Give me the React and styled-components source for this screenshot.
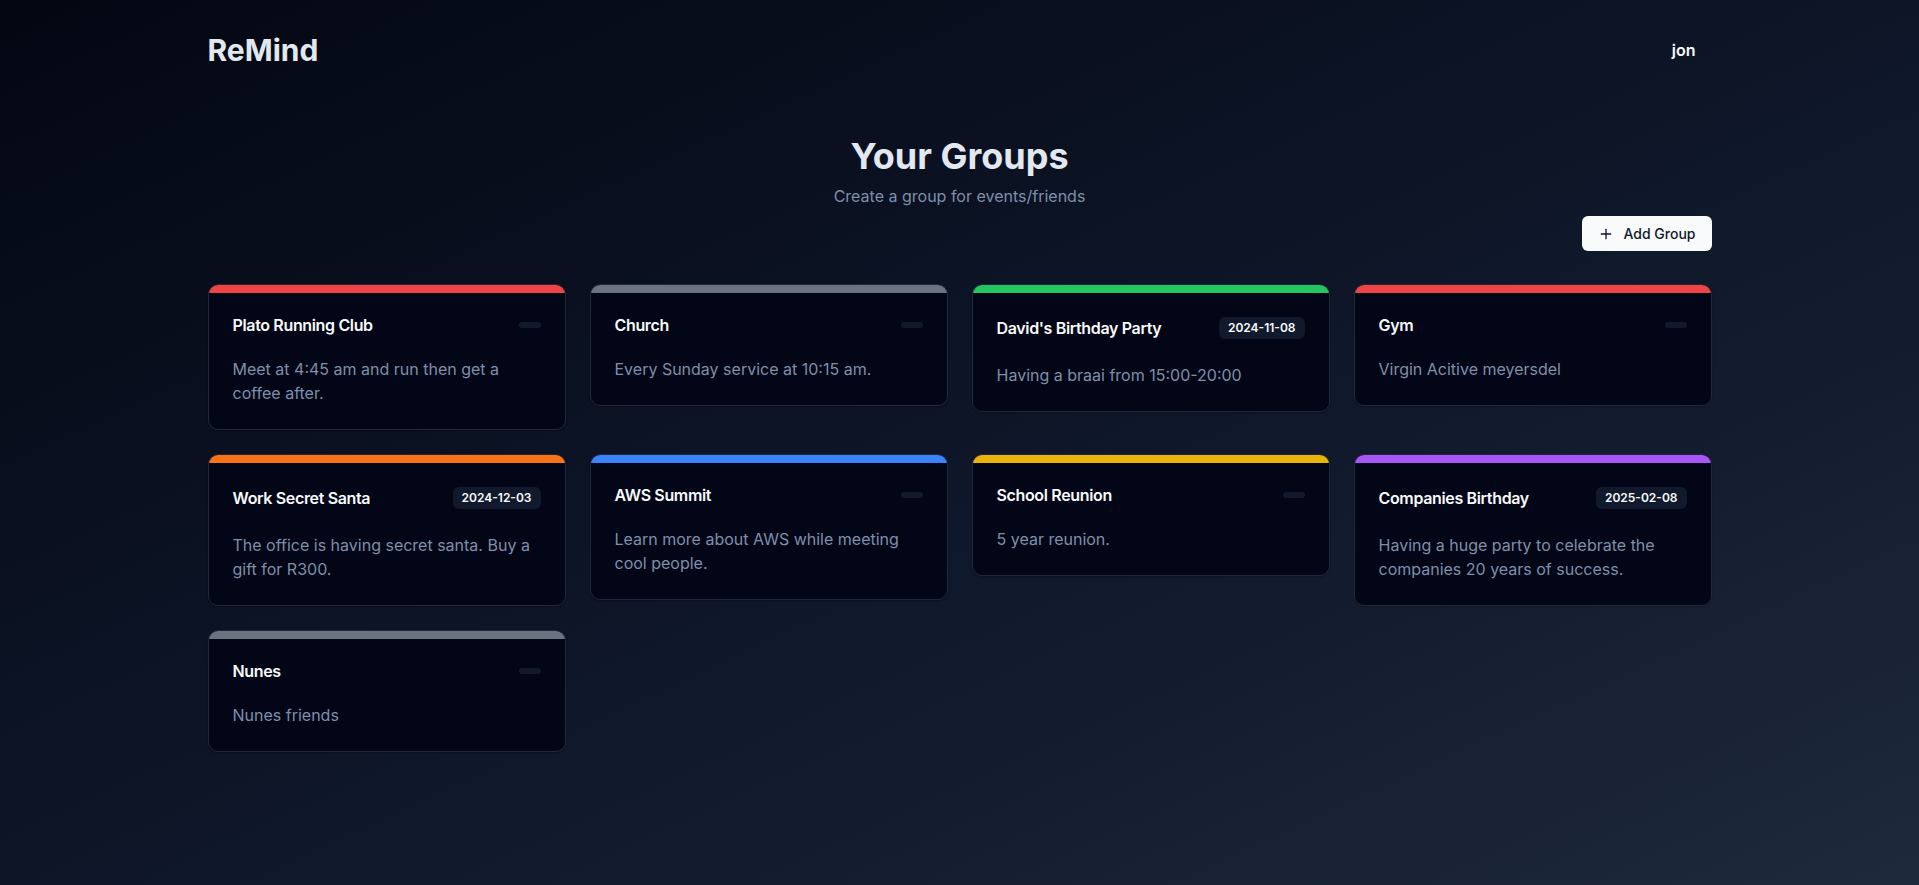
import React from "react";
import styled, { createGlobalStyle } from "styled-components";

const GlobalStyle = createGlobalStyle`
  * { box-sizing: border-box; }
  html, body { margin: 0; padding: 0; }
  body {
    font-family: Inter, "Noto Sans", sans-serif;
    background: #030712;
    color: #f8fafc;
  }
`;

const Page = styled.div`
  min-height: 100vh;
  background: linear-gradient(to bottom right, #030712 0%, #0f172a 55%, #1e293b 100%);
`;

const Wrap = styled.div`
  max-width: 1536px;
  margin: 0 auto;
  padding: 0 16px;
`;

const Header = styled.header`
  display: flex;
  align-items: center;
  justify-content: space-between;
  padding-top: 32px;
  height: 68px;
`;

const Logo = styled.h1`
  margin: 0;
  font-size: 30px;
  line-height: 36px;
  font-weight: 700;
  color: #e2e8f0;
`;

const UserButton = styled.button`
  background: transparent;
  border: none;
  color: #f8fafc;
  font-family: inherit;
  font-size: 16px;
  font-weight: 600;
  line-height: 24px;
  padding: 6px 16px;
  cursor: pointer;
`;

const Intro = styled.div`
  text-align: center;
  padding-top: 68px;
`;

const Title = styled.h2`
  margin: 0;
  font-size: 36px;
  line-height: 40px;
  font-weight: 700;
  color: #e2e8f0;
`;

const Subtitle = styled.p`
  margin: 8px 0 0;
  font-size: 16px;
  line-height: 24px;
  color: #7f8fa9;
`;

const Actions = styled.div`
  display: flex;
  justify-content: flex-end;
  margin-top: 8px;
  margin-bottom: 33px;
`;

const AddButton = styled.button`
  display: flex;
  align-items: center;
  gap: 9px;
  height: 35px;
  padding: 0 16px;
  background: #f8fafc;
  color: #0f172a;
  border: none;
  border-radius: 6px;
  font-family: inherit;
  font-size: 14px;
  font-weight: 500;
  cursor: pointer;
`;

const Grid = styled.div`
  display: grid;
  grid-template-columns: repeat(4, 1fr);
  gap: 24px;
  align-items: start;
  padding-bottom: 48px;
`;

const Card = styled.div`
  background: #020617;
  border: 1px solid #1e293b;
  border-radius: 10px;
  overflow: hidden;
  box-shadow: 0 1px 2px rgba(0, 0, 0, 0.3);
`;

const Bar = styled.div`
  height: 8px;
  background: ${(p) => p.$color};
`;

const CardHead = styled.div`
  display: flex;
  align-items: center;
  justify-content: space-between;
  padding: 24px 24px;
`;

const CardTitle = styled.h3`
  margin: 0;
  font-size: 16px;
  line-height: 16px;
  font-weight: 600;
  letter-spacing: -0.35px;
  color: #f8fafc;
`;

const Badge = styled.span`
  display: inline-block;
  min-width: 22px;
  padding: ${(p) => (p.$empty ? "2px 10px" : "3px 8px")};
  border-radius: 6px;
  background: #111a2c;
  border: 1px solid transparent;
  font-size: 12px;
  line-height: 14px;
  font-weight: 600;
  color: #f8fafc;
`;

const CardBody = styled.p`
  margin: 0;
  padding: 0 24px 24px;
  font-size: 16px;
  line-height: 24px;
  color: #7f8fa9;
`;

const PlusIcon = () => (
  <svg width="16" height="16" viewBox="0 0 24 24" fill="none" stroke="currentColor" strokeWidth="2" strokeLinecap="round" strokeLinejoin="round">
    <path d="M5 12h14" />
    <path d="M12 5v14" />
  </svg>
);

const groups = [
  { name: "Plato Running Club", color: "#ef4444", text: "Meet at 4:45 am and run then get a coffee after." },
  { name: "Church", color: "#6b7280", text: "Every Sunday service at 10:15 am." },
  { name: "David's Birthday Party", color: "#22c55e", date: "2024-11-08", text: "Having a braai from 15:00-20:00" },
  { name: "Gym", color: "#ef4444", text: "Virgin Acitive meyersdel" },
  { name: "Work Secret Santa", color: "#f97316", date: "2024-12-03", text: "The office is having secret santa. Buy a gift for R300." },
  { name: "AWS Summit", color: "#3b82f6", text: "Learn more about AWS while meeting cool people." },
  { name: "School Reunion", color: "#eab308", text: "5 year reunion." },
  { name: "Companies Birthday", color: "#a855f7", date: "2025-02-08", text: "Having a huge party to celebrate the companies 20 years of success." },
  { name: "Nunes", color: "#6b7280", text: "Nunes friends" },
];

export default function App() {
  return (
    <Page>
      <GlobalStyle />
      <Wrap>
        <Header>
          <Logo>ReMind</Logo>
          <UserButton>jon</UserButton>
        </Header>
        <Intro>
          <Title>Your Groups</Title>
          <Subtitle>Create a group for events/friends</Subtitle>
        </Intro>
        <Actions>
          <AddButton>
            <PlusIcon />
            Add Group
          </AddButton>
        </Actions>
        <Grid>
          {groups.map((g) => (
            <Card key={g.name}>
              <Bar $color={g.color} />
              <CardHead>
                <CardTitle>{g.name}</CardTitle>
                {g.date ? <Badge>{g.date}</Badge> : <Badge $empty />}
              </CardHead>
              <CardBody>{g.text}</CardBody>
            </Card>
          ))}
        </Grid>
      </Wrap>
    </Page>
  );
}
